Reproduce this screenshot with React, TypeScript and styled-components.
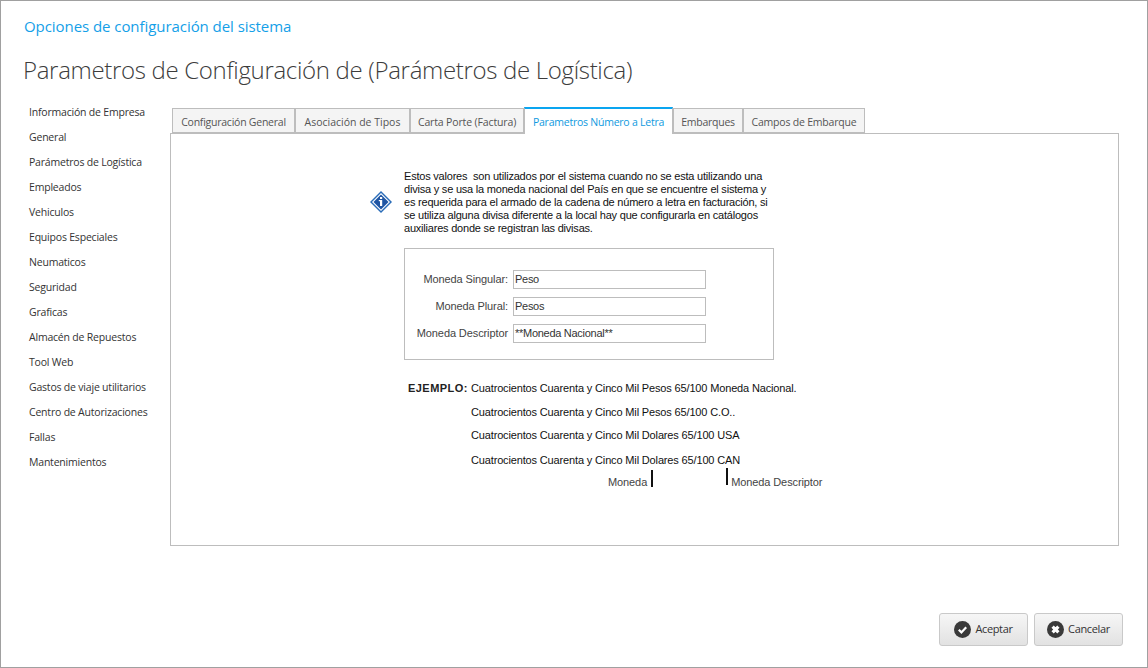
import React from "react";
import styled, { createGlobalStyle } from "styled-components";

const GlobalStyle = createGlobalStyle`
    html, body {
        margin: 0;
        padding: 0;
        background: #ffffff;
    }
    * {
        box-sizing: border-box;
    }
`;

const Window = styled.div`
    width: 1148px;
    height: 668px;
    border: 1px solid #a0a0a0;
    background: #ffffff;
    display: flex;
    flex-direction: column;
    font-family: "Open Sans", "Noto Sans", sans-serif;
    overflow: hidden;
`;

const Caption = styled.div`
    margin: 15px 0 0 23px;
    height: 20px;
    line-height: 20px;
    font-size: 15px;
    color: #14a0e8;
    letter-spacing: -0.06px;
`;

const Heading = styled.h1`
    margin: 16px 0 0 22px;
    height: 36px;
    line-height: 36px;
    font-size: 24px;
    font-weight: 300;
    color: #3c3c3c;
    letter-spacing: -0.32px;
`;

const Body = styled.div`
    margin-top: 11px;
    display: flex;
    align-items: flex-start;
`;

const SideMenu = styled.ul`
    list-style: none;
    margin: 1px 0 0 0;
    padding: 0 0 0 28px;
    width: 169px;
`;

const SideItem = styled.li`
    height: 25px;
    line-height: 25px;
    font-size: 10.5px;
    color: #333333;
    white-space: nowrap;
    letter-spacing: -0.2px;
`;

const TabsArea = styled.div`
    width: 949px;
    margin-top: 7px;
`;

const TabBar = styled.div`
    display: flex;
    align-items: flex-end;
    height: 27px;
    padding-left: 2px;
`;

const Tab = styled.div<{ $width: number; $active?: boolean; $tracking?: number }>`
    width: ${(p) => p.$width}px;
    height: ${(p) => (p.$active ? 27 : 25)}px;
    margin-bottom: ${(p) => (p.$active ? -1 : 0)}px;
    padding-top: 1px;
    line-height: 24px;
    text-align: center;
    font-size: 10.5px;
    letter-spacing: ${(p) => p.$tracking ?? -0.24}px;
    white-space: nowrap;
    color: ${(p) => (p.$active ? "#0f9ae0" : "#555555")};
    background: ${(p) => (p.$active ? "#ffffff" : "#f4f4f4")};
    border: 1px solid #bdbdbd;
    border-top: ${(p) => (p.$active ? "2px solid #0aa5f0" : "1px solid #bdbdbd")};
    border-bottom: ${(p) => (p.$active ? "none" : "1px solid #bdbdbd")};
    position: relative;
    z-index: ${(p) => (p.$active ? 1 : 0)};
`;

const TabPanel = styled.div`
    height: 413px;
    border: 1px solid #bdbdbd;
    background: #ffffff;
    padding: 35px 0 0 199px;
    font-family: "Liberation Sans", Arial, sans-serif;
    font-size: 11px;
    letter-spacing: -0.15px;
    color: #111111;
`;

const InfoRow = styled.div`
    display: flex;
    align-items: center;
`;

const InfoIconWrap = styled.div`
    width: 34px;
    height: 66px;
    display: flex;
    align-items: center;
    flex: none;
`;

const InfoText = styled.p`
    margin: 0;
    width: 385px;
    line-height: 13px;
    white-space: pre;
    letter-spacing: -0.21px;
`;

const GroupBox = styled.div`
    width: 370px;
    height: 112px;
    margin: 13px 0 0 34px;
    border: 1px solid #bdbdbd;
    padding: 21px 0 0 0;
    display: flex;
    flex-direction: column;
    gap: 8px;
`;

const FieldRow = styled.div`
    display: flex;
    align-items: center;
    height: 19px;
`;

const FieldLabel = styled.label`
    width: 103px;
    margin-top: -2px;
    text-align: right;
    color: #444444;
    letter-spacing: -0.1px;
    white-space: nowrap;
    flex: none;
`;

const FieldInput = styled.div`
    width: 193px;
    height: 19px;
    margin-left: 5px;
    border: 1px solid #bdbdbd;
    padding-left: 1px;
    line-height: 17px;
    color: #333333;
    letter-spacing: -0.28px;
    white-space: nowrap;
`;

const Examples = styled.div`
    margin: 21px 0 0 38px;
`;

const ExampleRow = styled.div<{ $height: number }>`
    display: flex;
    height: ${(p) => p.$height}px;
    line-height: 15px;
    white-space: nowrap;
`;

const ExampleTag = styled.span`
    width: 63px;
    flex: none;
    font-weight: 700;
    letter-spacing: 0.45px;
    color: #222222;
`;

const LegendRow = styled.div`
    display: flex;
    align-items: flex-start;
    margin: 2px 0 0 238px;
    color: #444444;
    letter-spacing: -0.1px;
    white-space: nowrap;
`;

const LegendText = styled.span<{ $gap?: number }>`
    margin: 5px 0 0 ${(p) => p.$gap ?? 0}px;
    line-height: 15px;
`;

const LegendBar = styled.span<{ $gap: number; $top: number }>`
    display: block;
    width: 2px;
    height: 17px;
    background: #111111;
    margin: ${(p) => p.$top}px 0 0 ${(p) => p.$gap}px;
`;

const Footer = styled.div`
    margin-top: 67px;
    display: flex;
    justify-content: flex-end;
    gap: 6px;
    padding-right: 24px;
`;

const ActionButton = styled.button`
    width: 89px;
    height: 33px;
    padding: 0;
    display: flex;
    align-items: center;
    justify-content: center;
    gap: 4px;
    border: 1px solid #c9c9c9;
    border-radius: 3px;
    background: linear-gradient(#f6f6f6, #e2e2e2);
    font-family: "Open Sans", "Noto Sans", sans-serif;
    font-size: 11px;
    letter-spacing: -0.35px;
    color: #333333;
`;

const ButtonLabel = styled.span`
    margin-top: -2px;
`;

const menuItems = [
    "Información de Empresa",
    "General",
    "Parámetros de Logística",
    "Empleados",
    "Vehiculos",
    "Equipos Especiales",
    "Neumaticos",
    "Seguridad",
    "Graficas",
    "Almacén de Repuestos",
    "Tool Web",
    "Gastos de viaje utilitarios",
    "Centro de Autorizaciones",
    "Fallas",
    "Mantenimientos",
];

const tabs = [
    { label: "Configuración General", width: 123 },
    { label: "Asociación de Tipos", width: 115, tracking: 0 },
    { label: "Carta Porte (Factura)", width: 114, tracking: -0.14 },
    { label: "Parametros Número a Letra", width: 149, active: true },
    { label: "Embarques", width: 70 },
    { label: "Campos de Embarque", width: 122, tracking: -0.2 },
];

const infoText = `Estos valores  son utilizados por el sistema cuando no se esta utilizando una
divisa y se usa la moneda nacional del País en que se encuentre el sistema y
es requerida para el armado de la cadena de número a letra en facturación, si
se utiliza alguna divisa diferente a la local hay que configurarla en catálogos
auxiliares donde se registran las divisas.`;

const InfoIcon = () => (
    <svg width="22" height="22" viewBox="0 0 22 22">
        <path d="M11 0 L22 11 L11 22 L0 11 Z" fill="#2a6cb8" />
        <path d="M11 2 L20 11 L11 20 L2 11 Z" fill="#ffffff" />
        <path d="M11 3.5 L18.5 11 L11 18.5 L3.5 11 Z" fill="#1f55a3" />
        <rect x="10" y="6" width="2.2" height="2" fill="#ffffff" />
        <rect x="10" y="9" width="2.2" height="6" fill="#ffffff" />
        <rect x="8.8" y="9" width="1.4" height="1.2" fill="#ffffff" />
    </svg>
);

const CheckIcon = () => (
    <svg width="17" height="17" viewBox="0 0 17 17">
        <circle cx="8.5" cy="8.5" r="8.5" fill="#3a3a3a" />
        <path d="M4.8 8.8 L7.4 11.4 L12.2 6.2" fill="none" stroke="#ffffff" strokeWidth="2.2" />
    </svg>
);

const CrossIcon = () => (
    <svg width="17" height="17" viewBox="0 0 17 17">
        <circle cx="8.5" cy="8.5" r="8.5" fill="#3a3a3a" />
        <path d="M5.6 5.6 L11.4 11.4 M11.4 5.6 L5.6 11.4" fill="none" stroke="#ffffff" strokeWidth="3.2" />
    </svg>
);

const App = () => {
    return (
        <>
            <GlobalStyle />
            <Window>
                <Caption>Opciones de configuración del sistema</Caption>
                <Heading>Parametros de Configuración de (Parámetros de Logística)</Heading>
                <Body>
                    <SideMenu>
                        {menuItems.map((item) => (
                            <SideItem key={item}>{item}</SideItem>
                        ))}
                    </SideMenu>
                    <TabsArea>
                        <TabBar>
                            {tabs.map((tab) => (
                                <Tab
                                    key={tab.label}
                                    $width={tab.width}
                                    $active={tab.active}
                                    $tracking={tab.tracking}
                                >
                                    {tab.label}
                                </Tab>
                            ))}
                        </TabBar>
                        <TabPanel>
                            <InfoRow>
                                <InfoIconWrap>
                                    <InfoIcon />
                                </InfoIconWrap>
                                <InfoText>{infoText}</InfoText>
                            </InfoRow>
                            <GroupBox>
                                <FieldRow>
                                    <FieldLabel>Moneda Singular:</FieldLabel>
                                    <FieldInput>Peso</FieldInput>
                                </FieldRow>
                                <FieldRow>
                                    <FieldLabel>Moneda Plural:</FieldLabel>
                                    <FieldInput>Pesos</FieldInput>
                                </FieldRow>
                                <FieldRow>
                                    <FieldLabel>Moneda Descriptor</FieldLabel>
                                    <FieldInput>**Moneda Nacional**</FieldInput>
                                </FieldRow>
                            </GroupBox>
                            <Examples>
                                <ExampleRow $height={24}>
                                    <ExampleTag>EJEMPLO:</ExampleTag>
                                    Cuatrocientos Cuarenta y Cinco Mil Pesos 65/100 Moneda Nacional.
                                </ExampleRow>
                                <ExampleRow $height={23}>
                                    <ExampleTag />
                                    Cuatrocientos Cuarenta y Cinco Mil Pesos 65/100 C.O..
                                </ExampleRow>
                                <ExampleRow $height={25}>
                                    <ExampleTag />
                                    Cuatrocientos Cuarenta y Cinco Mil Dolares 65/100 USA
                                </ExampleRow>
                                <ExampleRow $height={15}>
                                    <ExampleTag />
                                    Cuatrocientos Cuarenta y Cinco Mil Dolares 65/100 CAN
                                </ExampleRow>
                            </Examples>
                            <LegendRow>
                                <LegendText>Moneda</LegendText>
                                <LegendBar $gap={4} $top={0} />
                                <LegendBar $gap={73} $top={-2} />
                                <LegendText $gap={3}>Moneda Descriptor</LegendText>
                            </LegendRow>
                        </TabPanel>
                    </TabsArea>
                </Body>
                <Footer>
                    <ActionButton>
                        <CheckIcon />
                        <ButtonLabel>Aceptar</ButtonLabel>
                    </ActionButton>
                    <ActionButton>
                        <CrossIcon />
                        <ButtonLabel>Cancelar</ButtonLabel>
                    </ActionButton>
                </Footer>
            </Window>
        </>
    );
};

export default App;
